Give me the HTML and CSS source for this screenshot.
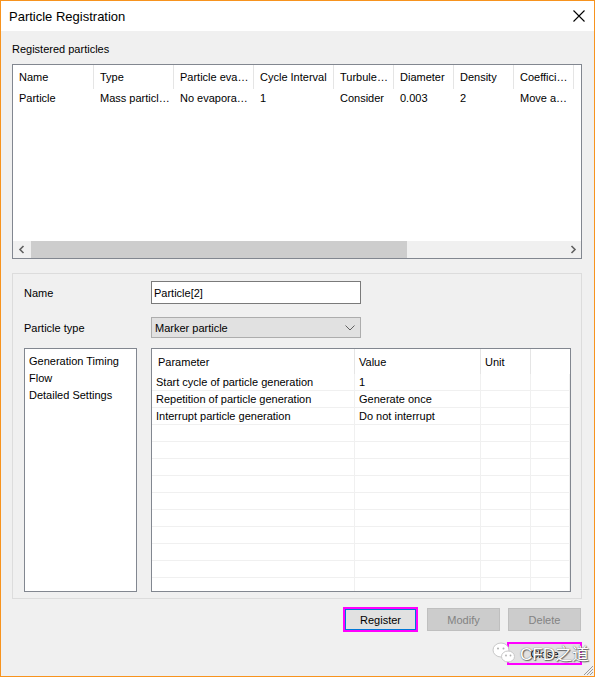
FILE: index.html
```html
<!DOCTYPE html>
<html lang="en">
<head>
    <meta charset="UTF-8">
    <title>Particle Registration</title>
    <link rel="stylesheet" href="styles.css">
</head>
<body>
    <div class="window">
        <div class="titlebar">
            <span class="title">Particle Registration</span>
            <svg class="close-x" width="12" height="12" viewBox="0 0 12 12">
                <path d="M0.5 0.5 L11.5 11.5 M11.5 0.5 L0.5 11.5" stroke="#000" stroke-width="1.1" fill="none"/>
            </svg>
        </div>

        <div class="content">
            <div class="caption">Registered particles</div>

            <div class="listview">
                <div class="lv-head">
                    <span class="first">Name</span>
                    <span>Type</span>
                    <span>Particle eva…</span>
                    <span>Cycle Interval</span>
                    <span class="narrow">Turbule…</span>
                    <span class="narrow">Diameter</span>
                    <span class="narrow">Density</span>
                    <span class="narrow">Coeffici…</span>
                </div>
                <div class="lv-body">
                    <div class="lv-row">
                        <span class="first">Particle</span>
                        <span>Mass particl…</span>
                        <span>No evapora…</span>
                        <span>1</span>
                        <span class="narrow">Consider</span>
                        <span class="narrow">0.003</span>
                        <span class="narrow">2</span>
                        <span class="narrow">Move a…</span>
                    </div>
                </div>
                <div class="hscroll">
                    <span class="arrow">
                        <svg width="8" height="9" viewBox="0 0 8 9"><path d="M5.5 1 L2 4.5 L5.5 8" stroke="#606060" stroke-width="1.6" fill="none"/></svg>
                    </span>
                    <div class="track"><div class="thumb"></div></div>
                    <span class="arrow">
                        <svg width="8" height="9" viewBox="0 0 8 9"><path d="M2.5 1 L6 4.5 L2.5 8" stroke="#606060" stroke-width="1.6" fill="none"/></svg>
                    </span>
                </div>
            </div>

            <div class="group">
                <div class="field-row">
                    <label for="pname">Name</label>
                    <input type="text" id="pname" class="text-input" value="Particle[2]">
                </div>
                <div class="field-row second">
                    <label>Particle type</label>
                    <div class="combo">
                        <span>Marker particle</span>
                        <svg width="10" height="6" viewBox="0 0 10 6"><path d="M0.5 0.5 L5 5 L9.5 0.5" stroke="#606060" stroke-width="1" fill="none"/></svg>
                    </div>
                </div>

                <div class="panes">
                    <ul class="tree">
                        <li>Generation Timing</li>
                        <li>Flow</li>
                        <li>Detailed Settings</li>
                    </ul>

                    <div class="grid">
                        <div class="grid-head">
                            <span class="hfirst">Parameter</span>
                            <span>Value</span>
                            <span>Unit</span>
                            <span></span>
                        </div>
                        <div class="grid-row"><span>Start cycle of particle generation</span><span>1</span><span></span><span></span></div>
                        <div class="grid-row"><span>Repetition of particle generation</span><span>Generate once</span><span></span><span></span></div>
                        <div class="grid-row"><span>Interrupt particle generation</span><span>Do not interrupt</span><span></span><span></span></div>
                        <div class="grid-row"><span></span><span></span><span></span><span></span></div>
                        <div class="grid-row"><span></span><span></span><span></span><span></span></div>
                        <div class="grid-row"><span></span><span></span><span></span><span></span></div>
                        <div class="grid-row"><span></span><span></span><span></span><span></span></div>
                        <div class="grid-row"><span></span><span></span><span></span><span></span></div>
                        <div class="grid-row"><span></span><span></span><span></span><span></span></div>
                        <div class="grid-row"><span></span><span></span><span></span><span></span></div>
                        <div class="grid-row"><span></span><span></span><span></span><span></span></div>
                        <div class="grid-row"><span></span><span></span><span></span><span></span></div>
                        <div class="grid-row"><span></span><span></span><span></span><span></span></div>
                    </div>
                </div>
            </div>

            <div class="actions">
                <button class="btn btn-main">Register</button>
                <button class="btn" disabled>Modify</button>
                <button class="btn" disabled>Delete</button>
            </div>
            <div class="actions close-row">
                <button class="btn btn-close">Close</button>
            </div>
        </div>

        <div class="watermark">
            <svg width="24" height="24" viewBox="0 0 24 24">
                <ellipse cx="9" cy="9" rx="8" ry="7" fill="#fff" stroke="#c8c8c8" stroke-width="1"/>
                <circle cx="6" cy="7.5" r="1" fill="#b0b0b0"/>
                <circle cx="11.5" cy="7.5" r="1" fill="#b0b0b0"/>
                <ellipse cx="16" cy="15.5" rx="6.5" ry="5.5" fill="#fff" stroke="#c8c8c8" stroke-width="1"/>
                <circle cx="14" cy="14.5" r="0.9" fill="#b0b0b0"/>
                <circle cx="18.5" cy="14.5" r="0.9" fill="#b0b0b0"/>
            </svg>
            <span class="wm-text">CFD之道</span>
        </div>

        <svg class="grip" width="10" height="10" viewBox="0 0 10 10">
            <path d="M10 1 L1 10 M10 4 L4 10 M10 7 L7 10" stroke="#9a9a9a" stroke-width="1" fill="none"/>
        </svg>
    </div>
</body>
</html>
```

FILE: styles.css
```css
* {
    box-sizing: border-box;
    margin: 0;
    padding: 0;
}

body {
    font-family: "Segoe UI", "Liberation Sans", Arial, sans-serif;
    font-size: 11px;
    color: #000;
    background: #fff;
}

.window {
    position: relative;
    width: 595px;
    height: 677px;
    border: 1px solid #f7931e;
    background: #f0f0f0;
}

.titlebar {
    height: 30px;
    background: #fff;
    display: flex;
    align-items: center;
    justify-content: space-between;
    padding: 0 9px 0 8px;
}

.title {
    font-size: 13px;
}

.content {
    padding: 11px 12px 0 11px;
}

.caption {
    line-height: 14px;
}

/* registered particles list */

.listview {
    margin-top: 8px;
    height: 195px;
    border: 1px solid #828790;
    background: #fff;
    display: flex;
    flex-direction: column;
}

.lv-head,
.lv-row {
    display: flex;
}

.lv-head span,
.lv-row span {
    flex-shrink: 0;
    width: 80px;
    padding-left: 6px;
    white-space: nowrap;
    overflow: hidden;
}

.lv-head span {
    height: 24px;
    line-height: 23px;
    padding-top: 1px;
    border-right: 1px solid #e5e5e5;
}

.lv-row span {
    height: 18px;
    line-height: 17px;
    padding-top: 1px;
}

.lv-head .first,
.lv-row .first {
    width: 81px;
}

.lv-head .narrow,
.lv-row .narrow {
    width: 60px;
}

.lv-body {
    flex: 1;
}

.hscroll {
    height: 17px;
    display: flex;
    background: #f0f0f0;
}

.hscroll .arrow {
    width: 17px;
    display: flex;
    align-items: center;
    justify-content: center;
}

.track {
    flex: 1;
    padding-left: 1px;
}

.thumb {
    width: 376px;
    height: 100%;
    background: #cdcdcd;
}

/* detail group */

.group {
    margin-top: 14px;
    height: 326px;
    border: 1px solid #dcdcdc;
    padding: 7px 10px 0 11px;
}

.field-row {
    display: grid;
    grid-template-columns: 127px 210px;
    align-items: center;
}

.field-row.second {
    margin-top: 13px;
}

.text-input {
    height: 23px;
    border: 1px solid #7a7a7a;
    background: #fff;
    font: inherit;
    padding: 0 2px;
    outline: none;
}

.combo {
    height: 21px;
    border: 1px solid #adadad;
    background: #e1e1e1;
    display: flex;
    align-items: center;
    justify-content: space-between;
    padding: 0 5px 0 3px;
}

.panes {
    margin-top: 10px;
    height: 244px;
    display: flex;
    gap: 14px;
}

.tree {
    width: 113px;
    border: 1px solid #828790;
    background: #fff;
    list-style: none;
    padding: 4px 4px;
}

.tree li {
    line-height: 17px;
}

.grid {
    width: 420px;
    border: 1px solid #828790;
    background: #fff;
    overflow: hidden;
}

.grid-head,
.grid-row {
    display: grid;
    grid-template-columns: 203px 126px 50px 39px;
}

.grid-head span {
    height: 25px;
    line-height: 24px;
    padding: 1px 0 0 4px;
    border-right: 1px solid #e5e5e5;
}

.grid-head .hfirst {
    padding-left: 6px;
}

.grid-head span:last-child {
    border-right: none;
}

.grid-row {
    height: 17px;
    border-bottom: 1px solid #f0f0f0;
}

.grid-row span {
    line-height: 15px;
    padding: 1px 0 0 4px;
    white-space: nowrap;
    overflow: hidden;
    border-right: 1px solid #f0f0f0;
}

/* buttons */

.actions {
    margin-top: 8px;
    display: flex;
    justify-content: flex-end;
    align-items: center;
    gap: 8px;
    padding-right: 1px;
}

.btn {
    width: 73px;
    height: 23px;
    font: inherit;
    background: #cccccc;
    border: 1px solid #bfbfbf;
    color: #838383;
}

.btn-main {
    width: 75px;
    height: 25px;
    margin-right: 1px;
    background: #e1e1e1;
    color: #000;
    border: 2px solid #ff00ff;
    box-shadow: inset 0 0 0 1px #0078d7;
}

.close-row {
    margin-top: 10px;
    padding-right: 0;
}

.btn-close {
    width: 75px;
    height: 23px;
    background: #e1e1e1;
    color: #000;
    border: 2px solid #ff00ff;
}

.watermark {
    position: absolute;
    left: 491px;
    top: 639px;
    display: flex;
    align-items: center;
    gap: 4px;
}

.wm-text {
    font-family: "Liberation Sans", "Noto Sans CJK SC", sans-serif;
    font-size: 17px;
    color: #fff;
    text-shadow: 0 0 1px #444, 1px 1px 1px #666;
}

.grip {
    position: absolute;
    right: 1px;
    bottom: 1px;
}
```
